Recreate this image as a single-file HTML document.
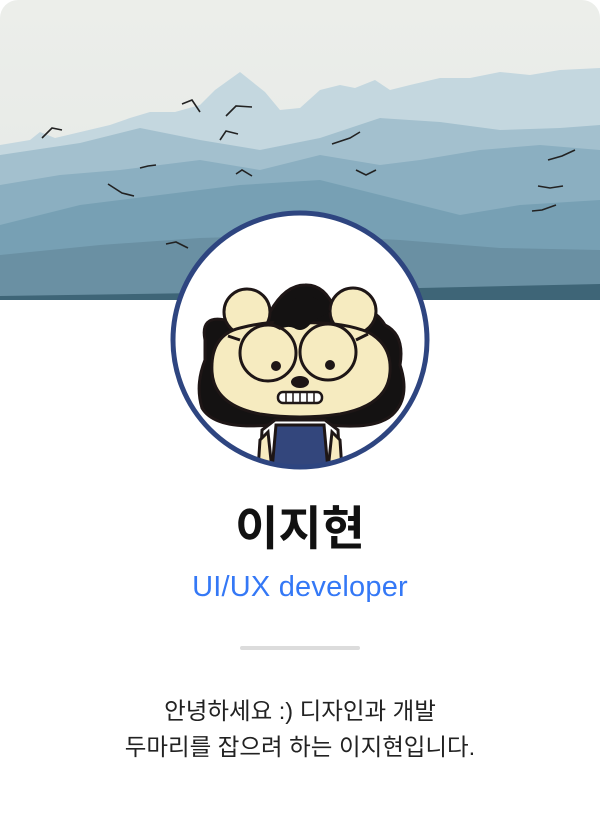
<!DOCTYPE html>
<html><head><meta charset="utf-8"><style>
html,body{margin:0;padding:0;background:#fff;}
body{width:600px;height:830px;position:relative;overflow:hidden;font-family:"Liberation Sans","Noto Sans CJK KR",sans-serif;}
.card{position:absolute;left:0;top:0;width:600px;height:830px;border-radius:18px;overflow:hidden;background:#fff;}
.name{position:absolute;top:490px;left:0;width:600px;text-align:center;font-size:47px;font-weight:bold;color:#111;}
.role{position:absolute;top:571px;left:0;width:600px;text-align:center;font-size:29px;color:#3478f6;letter-spacing:0.2px;}
.hr{position:absolute;top:646px;left:240px;width:120px;height:4px;background:#dcdcdc;border-radius:2px;}
.desc{position:absolute;top:693px;left:0;width:600px;text-align:center;font-size:23.5px;line-height:36px;color:#222;}
</style></head><body><div class="card">
<svg width="600" height="300" style="position:absolute;left:0;top:0">
<defs><linearGradient id="sky" x1="0" y1="0" x2="0" y2="1"><stop offset="0" stop-color="#eceeea"/><stop offset="1" stop-color="#e4e8e6"/></linearGradient></defs>
<rect width="600" height="300" fill="url(#sky)"/>
<path d="M0 145 L30 140 L40 132 L55 138 L110 125 L130 118 L150 112 L175 112 L200 105 L215 90 L240 72 L250 80 L265 92 L280 110 L300 108 L320 90 L340 85 L355 88 L375 80 L390 90 L410 85 L440 78 L470 78 L500 72 L530 75 L560 70 L600 68 L600 300 L0 300Z" fill="#c4d7df"/>
<path d="M0 155 L80 143 L140 128 L200 140 L260 150 L320 138 L380 118 L440 122 L500 130 L560 128 L600 125 L600 300 L0 300Z" fill="#a3c0ce"/>
<path d="M0 185 L60 175 L120 170 L200 160 L260 170 L320 155 L380 165 L420 160 L480 150 L540 145 L600 150 L600 300 L0 300Z" fill="#8bafc1"/>
<path d="M0 225 L80 205 L160 195 L240 185 L320 180 L400 200 L460 215 L520 205 L600 200 L600 300 L0 300Z" fill="#77a0b4"/>
<path d="M0 255 L100 245 L200 238 L300 235 L400 240 L500 248 L600 250 L600 300 L0 300Z" fill="#6a90a3"/>
<path d="M0 296 L200 293 L420 288 L600 284 L600 300 L0 300Z" fill="#3e6577"/>
<g stroke="#222" stroke-width="1.6" fill="none">
<path d="M42 138 L52 128 L62 130"/><path d="M182 104 L192 100 L200 112"/><path d="M226 116 L236 106 L252 107"/><path d="M220 140 L226 131 L238 134"/><path d="M332 144 L350 138 L360 132"/><path d="M108 184 L122 193 L134 196"/><path d="M140 168 L148 166 L156 165"/><path d="M236 174 L242 170 L252 176"/><path d="M356 170 L366 175 L376 170"/><path d="M548 160 L562 156 L575 150"/><path d="M538 186 L550 188 L563 186"/><path d="M532 211 L542 210 L556 205"/><path d="M166 244 L176 242 L188 248"/>
</g>
</svg>
<svg width="600" height="480" style="position:absolute;left:0;top:0">
<defs><clipPath id="c"><circle cx="300" cy="340" r="127"/></clipPath></defs>
<circle cx="300" cy="340" r="127" fill="#fff"/>
<g clip-path="url(#c)" stroke="#1e1616" stroke-width="3">
<path d="M205 340 Q200 315 225 320 Q245 300 270 312 Q285 285 305 285 Q325 284 335 310 Q370 300 385 325 Q405 335 400 365 Q410 395 395 412 Q380 430 330 425 L270 425 Q215 430 202 408 Q195 385 205 360Z" fill="#141212"/>
<path d="M260 470 L262 430 L275 420 L325 420 L338 430 L340 470Z" fill="#fff"/>
<path d="M258 470 L260 440 L268 432 L272 470Z M342 470 L340 440 L332 432 L328 470Z" fill="#f6ebc0"/>
<path d="M272 470 L276 425 L324 425 L328 470Z" fill="#33467c"/>
<circle cx="247" cy="312" r="23" fill="#f6ebc0"/><circle cx="353" cy="311" r="23" fill="#f6ebc0"/>
<path d="M212 372 Q210 335 240 328 Q270 320 300 323 Q340 321 368 332 Q392 345 390 372 Q388 405 340 414 Q300 420 260 414 Q214 405 212 372Z" fill="#f6ebc0"/>
<path d="M272 326 Q285 298 305 296 Q322 297 330 312 Q318 318 312 322 Q303 334 294 328 Q286 325 280 330Z" fill="#141212" stroke="none"/>
<circle cx="268" cy="353" r="28" fill="none"/><circle cx="328" cy="352" r="28" fill="none"/>
<line x1="240" y1="340" x2="228" y2="336"/><line x1="356" y1="340" x2="368" y2="334"/>
<circle cx="276" cy="366" r="5" fill="#1e1616" stroke="none"/><circle cx="330" cy="365" r="5" fill="#1e1616" stroke="none"/>
<ellipse cx="300" cy="382" rx="9" ry="6" fill="#1e1616" stroke="none"/>
<rect x="278" y="392" width="44" height="11" rx="5" fill="#fff" stroke-width="2.5"/>
<g stroke-width="1.5"><line x1="286" y1="393" x2="286" y2="402"/><line x1="293" y1="393" x2="293" y2="402"/><line x1="300" y1="393" x2="300" y2="402"/><line x1="307" y1="393" x2="307" y2="402"/><line x1="314" y1="393" x2="314" y2="402"/></g>
</g>
<circle cx="300" cy="340" r="127" fill="none" stroke="#2e4580" stroke-width="5"/>
</svg>
<div class="name">이지현</div>
<div class="role">UI/UX developer</div>
<div class="hr"></div>
<div class="desc">안녕하세요 :) 디자인과 개발<br>두마리를 잡으려 하는 이지현입니다.</div>
</div></body></html>
